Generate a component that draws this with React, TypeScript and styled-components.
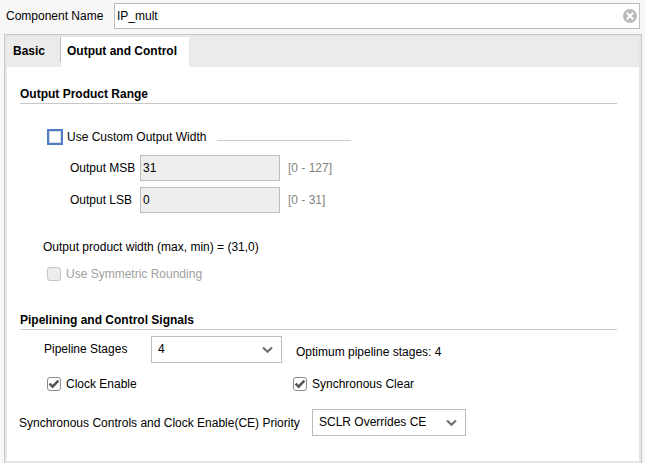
import React from "react";
import styled, { createGlobalStyle, css } from "styled-components";

const GlobalStyle = createGlobalStyle`
  *, *::before, *::after { box-sizing: border-box; }
  html, body, #root { height: 100%; }
  body {
    margin: 0;
    background: #f7f7f7;
    color: #000;
    font: 12px/16px "Liberation Sans", Arial, sans-serif;
  }
  input, select, button { font: inherit; color: inherit; margin: 0; }
`;

const Dialog = styled.main`
  display: flex;
  flex-direction: column;
  min-height: 100%;
  padding: 3px 3px 0 4px;
`;

const NameRow = styled.div`
  display: flex;
  align-items: center;
  gap: 6px;
  padding: 0 2px;
  margin-bottom: 5px;
`;

const NameField = styled.div`
  display: flex;
  align-items: center;
  flex: 1;
  height: 26px;
  padding: 0 2px;
  border: 1px solid #bcbcbc;
  background: #fff;
`;

const NameInput = styled.input`
  flex: 1;
  min-width: 0;
  height: 24px;
  padding: 0;
  border: 0;
  outline: 0;
  background: transparent;
`;

const ClearButton = styled.button`
  display: flex;
  padding: 0;
  border: 0;
  background: none;
`;

const Panel = styled.section`
  display: flex;
  flex-direction: column;
  flex: 1;
  border: 1px solid #c8c8c8;
  border-bottom: 0;
  background: #e6e6e6;
  padding: 2px;
`;

const TabList = styled.div`
  display: flex;
  height: 30px;
  background: #ebebeb;
`;

const Tab = styled.button<{ $active?: boolean }>`
  padding: 0 ${(p) => (p.$active ? 12 : 15)}px 2px 6px;
  border: 0;
  background: ${(p) => (p.$active ? "#fff" : "transparent")};
  font-weight: bold;
  white-space: nowrap;
`;

const TabDivider = styled.span`
  width: 1px;
  height: 25px;
  background: #bcbcbc;
`;

const TabBody = styled.form`
  flex: 1;
  padding: 18px 22px 16px 13px;
  background: #fff;
`;

const SectionTitle = styled.h2`
  margin: 0;
  height: 19px;
  border-bottom: 1px solid #c8c8c8;
  font-size: 12px;
  line-height: 18px;
  white-space: nowrap;
`;

const OutputGroup = styled.div`
  padding: 25px 0 26px 27px;
`;

const CheckLabel = styled.label<{ $disabled?: boolean; $focused?: boolean }>`
  display: inline-flex;
  align-items: center;
  gap: ${(p) => (p.$focused ? 4 : 5)}px;
  height: 16px;
  white-space: nowrap;
  color: ${(p) => (p.$disabled ? "#a0a0a0" : "#000")};
`;

const CheckBox = styled.span`
  display: grid;
  place-items: center;
  > * { grid-area: 1 / 1; }
  svg { pointer-events: none; }
`;

const CheckInput = styled.input<{ $focused?: boolean }>`
  appearance: none;
  width: 14px;
  height: 14px;
  border: 1px solid #8c8c8c;
  border-radius: 3px;
  background: #fff;
  &:disabled { border-color: #c6c6c6; background: #ececee; }
  ${(p) =>
    p.$focused &&
    css`
      width: 16px;
      height: 16px;
      border: 2px solid #4f7bcb;
      border-radius: 0;
      box-shadow: inset 0 0 0 1px #dcdcdc;
      outline: 0;
    `}
`;

const CustomWidthRow = styled.div`
  display: grid;
  grid-template-columns: 170px 134px;
  margin-bottom: 10px;
`;

const GroupRule = styled.span`
  height: 12px;
  border-bottom: 1px solid #c8c8c8;
`;

const RangeGrid = styled.div`
  display: grid;
  grid-template-columns: 62px 140px auto;
  justify-content: start;
  align-items: center;
  gap: 6px 8px;
  padding-left: 23px;
`;

const RangeInput = styled.input`
  width: 100%;
  height: 26px;
  padding: 0 2px;
  border: 1px solid #bcbcbc;
  border-radius: 0;
  background: #eee;
  &:disabled { color: #000; }
`;

const FieldLabel = styled.label<{ $width?: number }>`
  min-width: ${(p) => (p.$width ? `${p.$width}px` : "0")};
  white-space: nowrap;
`;

const Hint = styled.span`
  color: #828282;
`;

const WidthNote = styled.p`
  margin: 26px 0 11px -4px;
`;

const StageRow = styled.div`
  display: flex;
  align-items: center;
  padding: 6px 0 0 24px;
`;

const StageLabel = styled(FieldLabel)`
  padding-bottom: 2px;
`;

const StageHint = styled.span`
  padding: 4px 0 0 14px;
  white-space: nowrap;
`;

const SelectBox = styled.span<{ $width: number }>`
  display: grid;
  align-items: center;
  justify-items: end;
  width: ${(p) => p.$width}px;
  > * { grid-area: 1 / 1; }
  svg { margin-right: 9px; pointer-events: none; }
`;

const Select = styled.select`
  appearance: none;
  width: 100%;
  height: 27px;
  padding: 0 24px 2px 6px;
  border: 1px solid #bcbcbc;
  border-radius: 0;
  background: #fff;
`;

const SignalRow = styled.div`
  display: grid;
  grid-template-columns: 246px auto;
  justify-content: start;
  padding: 13px 0 17px 27px;
`;

const PriorityRow = styled.div`
  display: flex;
  align-items: center;
  gap: 6px;
  margin-left: -1px;
`;

const Chevron = () => (
  <svg width="11" height="8" viewBox="0 0 11 8" fill="none" aria-hidden="true">
    <path d="M1 1.5 5.5 5.8 10 1.5" stroke="#6e6e6e" strokeWidth="2.1" />
  </svg>
);

type CheckProps = {
  label: string;
  checked?: boolean;
  disabled?: boolean;
  focused?: boolean;
};

const Check = ({ label, checked, disabled, focused }: CheckProps) => {
  const [on, setOn] = React.useState(!!checked);
  return (
    <CheckLabel $disabled={disabled} $focused={focused}>
      <CheckBox>
        <CheckInput
          type="checkbox"
          checked={on}
          onChange={(e) => setOn(e.target.checked)}
          disabled={disabled}
          $focused={focused}
        />
        {on && (
          <svg width="14" height="14" viewBox="0 0 14 14" fill="none" aria-hidden="true">
            <path d="M2.6 6.6 5.6 9.6 11.4 3.6" stroke="#555" strokeWidth="2.5" />
          </svg>
        )}
      </CheckBox>
      {label}
    </CheckLabel>
  );
};

type DropDownProps = { id: string; width: number; options: string[]; value: string };

const DropDown = ({ id, width, options, value }: DropDownProps) => (
  <SelectBox $width={width}>
    <Select id={id} defaultValue={value}>
      {options.map((o) => (
        <option key={o}>{o}</option>
      ))}
    </Select>
    <Chevron />
  </SelectBox>
);

export default function App() {
  const [name, setName] = React.useState("IP_mult");
  return (
    <>
      <GlobalStyle />
      <Dialog>
        <NameRow>
          <FieldLabel htmlFor="name" $width={102}>Component Name</FieldLabel>
          <NameField>
            <NameInput id="name" value={name} onChange={(e) => setName(e.target.value)} />
            <ClearButton type="button" aria-label="Clear" onClick={() => setName("")}>
              <svg width="14" height="14" viewBox="0 0 14 14" aria-hidden="true">
                <circle cx="7" cy="7" r="7" fill="#b9b9b9" />
                <path d="M3.8 3.8 10.2 10.2M10.2 3.8 3.8 10.2" stroke="#fff" strokeWidth="2" />
              </svg>
            </ClearButton>
          </NameField>
        </NameRow>
        <Panel>
          <TabList role="tablist">
            <Tab type="button" role="tab" aria-selected={false}>Basic</Tab>
            <TabDivider />
            <Tab type="button" role="tab" aria-selected $active>Output and Control</Tab>
          </TabList>
          <TabBody>
            <SectionTitle>Output Product Range</SectionTitle>
            <OutputGroup>
              <CustomWidthRow>
                <Check label="Use Custom Output Width" focused />
                <GroupRule />
              </CustomWidthRow>
              <RangeGrid>
                <FieldLabel htmlFor="msb">Output MSB</FieldLabel>
                <RangeInput id="msb" defaultValue="31" disabled />
                <Hint>[0 - 127]</Hint>
                <FieldLabel htmlFor="lsb">Output LSB</FieldLabel>
                <RangeInput id="lsb" defaultValue="0" disabled />
                <Hint>[0 - 31]</Hint>
              </RangeGrid>
              <WidthNote>Output product width (max, min) = (31,0)</WidthNote>
              <Check label="Use Symmetric Rounding" disabled />
            </OutputGroup>
            <SectionTitle>Pipelining and Control Signals</SectionTitle>
            <StageRow>
              <StageLabel htmlFor="stages" $width={107}>Pipeline Stages</StageLabel>
              <DropDown id="stages" width={131} value="4" options={["1", "2", "3", "4", "5", "6"]} />
              <StageHint>Optimum pipeline stages: 4</StageHint>
            </StageRow>
            <SignalRow>
              <Check label="Clock Enable" checked />
              <Check label="Synchronous Clear" checked />
            </SignalRow>
            <PriorityRow>
              <FieldLabel htmlFor="priority" $width={287}>Synchronous Controls and Clock Enable(CE) Priority</FieldLabel>
              <DropDown
                id="priority"
                width={154}
                value="SCLR Overrides CE"
                options={["SCLR Overrides CE", "CE Overrides SCLR"]}
              />
            </PriorityRow>
          </TabBody>
        </Panel>
      </Dialog>
    </>
  );
}
